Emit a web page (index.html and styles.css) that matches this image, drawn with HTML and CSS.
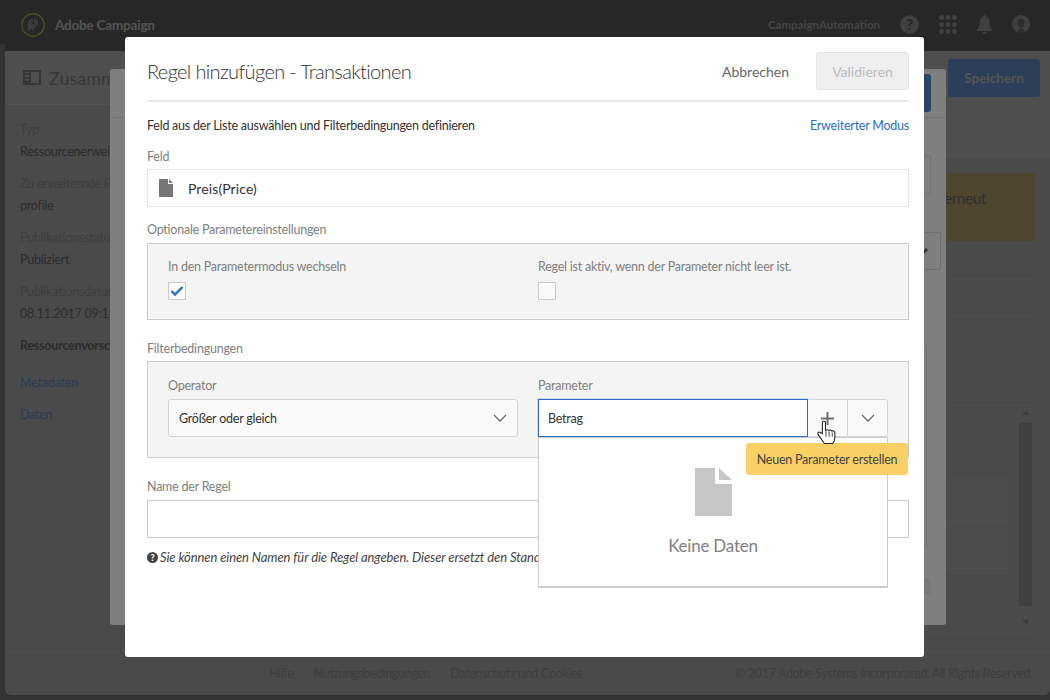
FILE: index.html
```html
<!DOCTYPE html>
<html lang="de">
<head>
<meta charset="utf-8">
<title>Adobe Campaign</title>
<link rel="stylesheet" href="styles.css">
</head>
<body>
<div class="app">
  <header class="topbar">
    <div class="brand">
      <svg class="logo" width="24" height="24" viewBox="0 0 24 24"><circle cx="12" cy="12" r="11.200" fill="none" stroke="#a0a64a" stroke-width="1.200"/><path d="M8 18V10Q8 6.500 11.500 6.500M10 16V10Q10 8.500 12 8.500M12 18V11M14 15V6M16 13V7" fill="none" stroke="#9a9a9a" stroke-width="1"/></svg>
      <span class="brand-name">Adobe Campaign</span>
    </div>
    <div class="top-tools">
      <span class="org">CampaignAutomation</span>
      <svg class="tool-help" width="19" height="19" viewBox="0 0 19 19"><circle cx="9.500" cy="9.500" r="9.300" fill="#808080"/><text x="9.500" y="15" text-anchor="middle" class="q-mark">?</text></svg>
      <svg width="18" height="19" viewBox="0 0 18 19" fill="#808080"><circle cx="2.500" cy="2.500" r="2.500"/><circle cx="9" cy="2.500" r="2.500"/><circle cx="15.500" cy="2.500" r="2.500"/><circle cx="2.500" cy="9.500" r="2.500"/><circle cx="9" cy="9.500" r="2.500"/><circle cx="15.500" cy="9.500" r="2.500"/><circle cx="2.500" cy="16.500" r="2.500"/><circle cx="9" cy="16.500" r="2.500"/><circle cx="15.500" cy="16.500" r="2.500"/></svg>
      <svg width="15" height="19" viewBox="0 0 15 19" fill="#808080"><path d="M7.500 0q1.500 0 1.500 1.500Q12.500 3 12.500 8v3l2.500 3.500V16H0v-1.500L2.500 11V8Q2.500 3 6 1.500 6 0 7.500 0zM5.500 17h4q0 2-2 2t-2-2z"/></svg>
      <svg width="18" height="18" viewBox="0 0 18 18"><circle cx="9" cy="9" r="9" fill="#808080"/><ellipse cx="9" cy="8" rx="3.500" ry="4.500" fill="#5c5c5c"/><path d="M5 18q1-5 4-5t4 5z" fill="#5c5c5c"/></svg>
    </div>
  </header>
  <div class="page">
    <div class="page-body">
      <aside class="summary">
        <div class="page-head">
          <svg class="panel-icon" width="18" height="15" viewBox="0 0 18 15"><path d="M1 1h16v13H1zM7 1v13" fill="none" stroke="#6c6c6c" stroke-width="2"/><path d="M2 3h4v2H2zM2 7h4v2H2zM2 11h4v2H2z" fill="#6c6c6c"/></svg>
          <span class="page-title">Zusammenfassung</span>
        </div>
        <div class="facts">
          <div class="s-label">Typ</div><div class="s-value">Ressourcenerweiterung</div>
          <div class="s-label">Zu erweiternde Ressource</div><div class="s-value">profile</div>
          <div class="s-label">Publikationsstatus</div><div class="s-value">Publiziert</div>
          <div class="s-label">Publikationsdatum</div><div class="s-value">08.11.2017 09:15:00</div>
          <div class="s-strong">Ressourcenvorschau</div>
          <div class="s-link s-link-first">Metadaten</div>
          <div class="s-link">Daten</div>
        </div>
      </aside>
      <main class="main">
        <div class="toolbar"><button class="save">Speichern</button></div>
        <div class="notice">erneut</div>
        <div class="faint-box"></div>
        <div class="list">
          <div class="rows"><div class="row"></div><div class="row"></div></div>
          <div class="scroll-track"><i class="arrow-up"></i><b class="thumb"></b><i class="arrow-down"></i></div>
        </div>
      </main>
    </div>
    <footer class="page-foot">
      <nav class="foot-links"><span>Hilfe</span><span>Nutzungsbedingungen</span><span>Datenschutz und Cookies</span></nav>
      <span>© 2017 Adobe Systems Incorporated. All Rights Reserved.</span>
    </footer>
  </div>
</div>
<div class="rail-notch"></div>

<div class="dialog-back">
  <div class="back-head"><span class="back-btn"></span></div>
  <div class="back-box"></div>
  <div class="back-pencil">
    <svg width="8" height="8" viewBox="0 0 8 8"><path d="M0 8l1-3 4-4 2 2-4 4z" fill="#666"/></svg>
  </div>
  <div class="back-big"></div>
  <div class="back-strip"></div>
</div>
<div class="veil"></div>

<section class="dialog">
  <div class="dlg-head">
    <h1>Regel hinzufügen - Transaktionen</h1>
    <div class="dlg-actions">
      <button class="cancel">Abbrechen</button>
      <button class="validate">Validieren</button>
    </div>
  </div>
  <div class="intro-row">
    <span>Feld aus der Liste auswählen und Filterbedingungen definieren</span>
    <a class="adv">Erweiterter Modus</a>
  </div>
  <div class="label lab-feld">Feld</div>
  <div class="field-box">
    <svg width="14" height="18" viewBox="0 0 14 18" fill="#777"><path d="M0 0h9v5h5v13H0zM10 0l4 4h-4z"/></svg>
    <span class="field-value">Preis(Price)</span>
  </div>
  <div class="label lab-opt">Optionale Parametereinstellungen</div>
  <div class="panel panel-opt">
    <div class="col">
      <div class="label">In den Parametermodus wechseln</div>
      <span class="check">
        <svg width="14" height="12" viewBox="0 0 14 12"><path d="M1.500 6l3.500 3.500 7.500-7.500" fill="none" stroke="#2d6cc9" stroke-width="2.400"/></svg>
      </span>
    </div>
    <div class="col">
      <div class="label">Regel ist aktiv, wenn der Parameter nicht leer ist.</div>
      <span class="check"></span>
    </div>
  </div>
  <div class="label lab-filter">Filterbedingungen</div>
  <div class="panel panel-filter">
    <div class="col">
      <div class="label">Operator</div>
      <div class="select">
        <span>Größer oder gleich</span>
        <svg width="14" height="8" viewBox="0 0 14 8"><path d="M1 1l6 6 6-6" fill="none" stroke="#666" stroke-width="1.300"/></svg>
      </div>
    </div>
    <div class="col">
      <div class="label">Parameter</div>
      <div class="combo">
        <div class="combo-input">Betrag</div>
        <div class="combo-btn plus">
          <svg width="13" height="13" viewBox="0 0 13 13"><path d="M6.500 0v13M0 6.500h13" stroke="#707070" stroke-width="2"/></svg>
        </div>
        <div class="combo-btn">
          <svg width="14" height="8" viewBox="0 0 14 8"><path d="M1 1l6 6 6-6" fill="none" stroke="#666" stroke-width="1.300"/></svg>
        </div>
      </div>
    </div>
  </div>
  <div class="label lab-name">Name der Regel</div>
  <div class="name-input"></div>
  <p class="hint">
    <svg width="11" height="11" viewBox="0 0 11 11"><circle cx="5.500" cy="5.500" r="5.500" fill="#444"/><text x="5.500" y="9" text-anchor="middle" class="q-small">?</text></svg>
    <em>Sie können einen Namen für die Regel angeben. Dieser ersetzt den Standardnamen.</em>
  </p>
</section>

<div class="dropdown">
  <svg width="37" height="48" viewBox="0 0 37 48" fill="#c6c6c6"><path d="M0 0h20v16h17v32H0zM24 0l13 12H24z"/></svg>
  <div class="no-data">Keine Daten</div>
</div>
<div class="tooltip">Neuen Parameter erstellen</div>
<svg class="cursor" width="19" height="24" viewBox="0 0 18 23"><path d="M5 2q1.500-1.500 3 0v8q1.500-1.500 3 0 1.500-1 3 .5 2.500-.5 3 1.500v5q0 3-2 5.500H7L1 14q-1-2 1-2.500L5 13z" fill="#fff" stroke="#222" stroke-width="1"/><path d="M8.500 11v5M11.500 11v5M14.500 12v4" stroke="#222" stroke-width=".8" fill="none"/></svg>
</body>
</html>
```
FILE: styles.css
```css
* { box-sizing: border-box; }
html, body { margin: 0; height: 700px; overflow: hidden; }
body { font-family: "Lato", "Liberation Sans", sans-serif; font-size: 12.500px; letter-spacing: -.23px; color: #333; background: #666; position: relative; }
button { font: inherit; }

.app { height: 700px; display: flex; flex-direction: column; }
.topbar { height: 51px; flex: none; background: #4e4e4e; display: flex; justify-content: space-between; align-items: center; padding: 0 20px 0 21px; }
.brand { display: flex; align-items: center; gap: 10px; margin-top: -2px; }
.brand-name { color: #a8a8a8; font-size: 13.500px; font-weight: 700; letter-spacing: -.2px; }
.top-tools { display: flex; align-items: center; gap: 20px; margin-top: -3px; }
.org { color: #8a8a8a; font-size: 11.500px; font-weight: 700; letter-spacing: 0; }
.q-mark { font: 900 15px "Lato", sans-serif; fill: #4e4e4e; }
.rail-notch { position: absolute; left: 0; top: 44px; width: 5px; height: 7px; background: #666; }

.page { flex: 1; margin: 0 0 5px 5px; display: flex; flex-direction: column; background: #949494; border-radius: 0 0 6px 6px; }
.page-body { flex: 1; display: flex; min-height: 0; }
.summary { width: 248px; flex: none; }
.page-head { height: 54px; display: flex; align-items: center; gap: 8px; padding: 0 0 0 18px; border-bottom: 1px solid #a2a2a2; background: #9c9c9c; }
.page-title { font-size: 18px; color: #707070; white-space: nowrap; letter-spacing: 0; }
.facts { padding: 16px 15px; color: #585858; }
.s-label { color: #7c7c7c; line-height: 18px; margin-top: 14px; }
.s-label:first-child { margin-top: 0; }
.s-value { margin-top: 4px; line-height: 18px; }
.s-strong { font-weight: 700; margin-top: 14px; line-height: 18px; }
.s-link { color: #5a78a8; margin-top: 14px; line-height: 18px; }
.s-link-first { margin-top: 19px; }

.main { flex: 1; display: flex; flex-direction: column; align-items: flex-end; min-width: 0; }
.toolbar { align-self: stretch; height: 106px; border-bottom: 1px solid #a0a0a0; background: #9c9c9c; display: flex; justify-content: flex-end; padding: 8px 10px 0 0; }
.save { width: 92px; height: 38px; background: #587cb4; color: #a8a8a8; border: 0; border-radius: 3px; font-size: 13.500px; font-weight: 700; }
.notice { margin: 16px 15px 0 0; width: 300px; height: 68px; background: #9a8a5c; padding: 16px 49px 0 0; text-align: right; font-size: 15px; color: #5a5a5a; border-radius: 2px; }
.faint-box { margin: 38px 15px 0 0; width: 300px; height: 37px; border: 1px solid #9c9c9c; }
.list { margin: 89px 15px 0 0; width: 400px; height: 229px; border: 1px solid #9c9c9c; border-width: 1px 1px 1px 0; display: flex; justify-content: flex-end; padding-right: 2px; }
.rows { width: 280px; margin: 72px 12px 0 0; height: 98px; }
.row { height: 49px; background: #999; border-bottom: 1px solid #8e8e8e; }
.scroll-track { margin-top: 5px; width: 13px; display: flex; flex-direction: column; align-items: center; }
.thumb { width: 13px; height: 183px; margin: 8px 0 14px; background: #808080; }
.arrow-up, .arrow-down { width: 0; height: 0; border: 4px solid transparent; }
.arrow-up { border-bottom-color: #747474; border-top-width: 0; }
.arrow-down { border-top-color: #747474; border-bottom-width: 0; }
.page-foot { height: 44px; flex: none; display: flex; justify-content: space-between; align-items: center; padding: 0 17px 0 264px; color: #7c7c7c; letter-spacing: -.35px; border-top: 1px solid #9c9c9c; }
.foot-links { display: flex; gap: 20px; }

.dialog-back { position: absolute; left: 110px; top: 69px; width: 836px; height: 556px; background: #fff; border-radius: 3px; display: flex; flex-direction: column; align-items: flex-end; padding-right: 15px; }
.back-head { align-self: stretch; height: 49px; border-bottom: 1px solid #e4e4e4; margin-right: -15px; display: flex; justify-content: flex-end; padding: 5px 15px 0 0; }
.back-btn { width: 120px; height: 38px; background: #5588d0; border-radius: 3px; }
.back-box { width: 120px; height: 38px; margin-top: 38px; border: 1px solid #e4e4e4; }
.back-pencil { width: 40px; height: 38px; margin: 38px -10px 0 0; border: 1px solid #dcdcdc; display: flex; justify-content: flex-end; align-items: center; padding-right: 11px; border-radius: 2px; }
.back-big { width: 120px; height: 202px; margin: 75px 4px 0 0; border: 1px solid #e0e0e0; border-radius: 3px; }
.back-strip { width: 120px; height: 16px; margin-top: 31px; background: #f2f2f2; }
.veil { position: absolute; inset: 0; background: rgba(0,0,0,.5); }

.dialog { position: absolute; left: 125px; top: 37px; width: 799px; height: 620px; background: #fff; border-radius: 3px; padding: 15px 15px 0 22px; }
.dlg-head { height: 50px; display: flex; justify-content: space-between; align-items: center; border-bottom: 2px solid #e8e8e8; padding-bottom: 10px; }
h1 { margin: 0; font-size: 20px; font-weight: 300; color: #333; letter-spacing: -.65px; }
.dlg-actions { display: flex; align-items: center; gap: 27px; }
.cancel { background: none; border: 0; padding: 0; color: #666; font-size: 14px; }
.validate { width: 93px; height: 38px; background: #efefef; border: 1px solid #e4e4e4; border-radius: 3px; color: #bbb; font-size: 14px; }
.intro-row { display: flex; justify-content: space-between; margin-top: 15px; line-height: 18px; }
.adv { color: #2d6cc9; }
.label { color: #808080; line-height: 18px; }
.lab-feld { margin-top: 13px; }
.field-box { height: 38px; margin-top: 3px; border: 1px solid #e6e6e6; display: flex; align-items: center; gap: 15px; padding-left: 11px; }
.field-value { font-size: 14px; letter-spacing: .1px; }
.lab-opt { margin-top: 14px; }
.panel { background: #f4f4f4; border: 1px solid #ccc; display: grid; grid-template-columns: 370px 1fr; padding: 14px 20px 0; margin-top: 4px; }
.panel-opt { height: 77px; }
.check { display: flex; width: 18px; height: 18px; margin: 6px 0 0; border: 1px solid #ccc; background: #fafafa; align-items: center; justify-content: center; }
.lab-filter { margin-top: 20px; }
.panel-filter { height: 97px; margin-top: 3px; padding-top: 15px; }
.select { margin-top: 4px; width: 350px; height: 38px; border: 1px solid #d4d4d4; border-radius: 3px; background: #fafafa; display: flex; align-items: center; justify-content: space-between; padding: 0 10px; }
.combo { margin-top: 4px; display: flex; width: 350px; height: 38px; }
.combo-input { width: 270px; border: 1px solid #2d6cc9; box-shadow: 0 0 1px #2d6cc9; background: #fff; display: flex; align-items: center; padding-left: 9px; }
.combo-btn { width: 40px; flex: 1; background: #fafafa; border: 1px solid #d4d4d4; border-radius: 0 3px 3px 0; display: flex; align-items: center; justify-content: center; }
.plus { border-right: 0; border-left: 0; border-radius: 0; }
.lab-name { margin-top: 20px; }
.name-input { height: 38px; margin-top: 4px; border: 1px solid #ccc; }
.hint { margin: 11px 0 0; display: flex; align-items: center; gap: 2px; line-height: 16px; color: #444; font-size: 13px; letter-spacing: -.1px; }
.hint em { font-style: italic; }
.q-small { font: 900 9px "Lato", sans-serif; fill: #fff; }

.dropdown { position: absolute; left: 538px; top: 437px; width: 350px; height: 151px; background: #fff; border: 1px solid #ccc; border-bottom-width: 2px; display: flex; flex-direction: column; align-items: center; padding-top: 30px; }
.no-data { margin-top: 19px; font-size: 17px; color: #808080; line-height: 22px; }
.tooltip { position: absolute; left: 746px; top: 443px; width: 162px; height: 32px; background: #f9d066; border-radius: 3px; color: #444; display: flex; align-items: center; justify-content: center; }
.cursor { position: absolute; left: 817px; top: 420px; }
```
